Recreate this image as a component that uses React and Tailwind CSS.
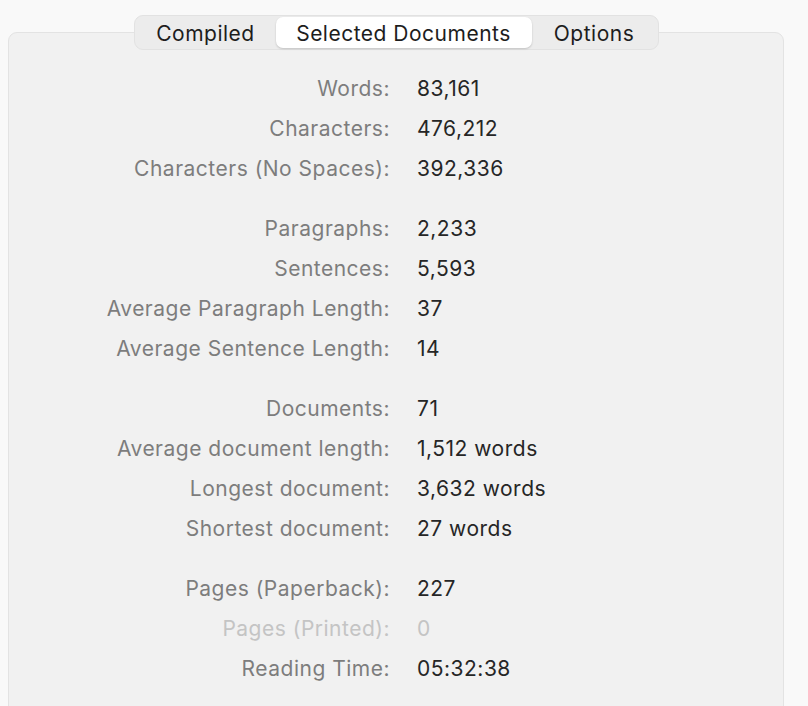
const GROUPS = [
  [
    { label: 'Words:', value: '83,161' },
    { label: 'Characters:', value: '476,212' },
    { label: 'Characters (No Spaces):', value: '392,336' }
  ],
  [
    { label: 'Paragraphs:', value: '2,233' },
    { label: 'Sentences:', value: '5,593' },
    { label: 'Average Paragraph Length:', value: '37' },
    { label: 'Average Sentence Length:', value: '14' }
  ],
  [
    { label: 'Documents:', value: '71' },
    { label: 'Average document length:', value: '1,512 words' },
    { label: 'Longest document:', value: '3,632 words' },
    { label: 'Shortest document:', value: '27 words' }
  ],
  [
    { label: 'Pages (Paperback):', value: '227' },
    { label: 'Pages (Printed):', value: '0', disabled: true },
    { label: 'Reading Time:', value: '05:32:38' }
  ]
]

const TABS = [
  { label: 'Compiled', width: 'w-[140px]' },
  { label: 'Selected Documents', width: 'w-[256px]', active: true },
  { label: 'Options', width: 'w-[125px]' }
]

export default function App() {
  return (
    <div className="h-screen overflow-hidden bg-[#f9f9f9] pt-[15px] font-['Inter','Liberation_Sans',sans-serif] text-[21px] tracking-[0.5px]">
      <div className="ml-[8px] w-[776px]">
        {/* Tabs */}
        <div className="relative z-10 flex justify-center">
          <div className="flex h-[35px] items-center rounded-[9px] border border-[#e2e2e2] bg-[#ececec] px-[1px]">
            {TABS.map(tab => (
              <div
                key={tab.label}
                className={
                  tab.active
                    ? `${tab.width} flex h-[31px] items-center justify-center rounded-[7px] bg-white pt-[3px] text-[#1d1d1d] shadow-[0_1px_2px_rgba(0,0,0,0.18)]`
                    : `${tab.width} flex h-[31px] items-center justify-center pt-[3px] text-[#1d1d1d]`
                }
              >
                {tab.label}
              </div>
            ))}
          </div>
        </div>

        {/* Panel */}
        <div className="-mt-[18px] h-[720px] rounded-[9px] border border-[#e3e3e3] bg-[#f1f1f1] pt-[36px]">
          {GROUPS.map((group, i) => (
            <div key={i} className={i > 0 ? 'mt-[20px]' : ''}>
              {group.map(row => (
                <div key={row.label} className="flex h-[40px] items-center">
                  <div
                    className={`w-[381px] text-right ${row.disabled ? 'text-[#c4c4c4]' : 'text-[#7d7d7d]'}`}
                  >
                    {row.label}
                  </div>
                  <div className={`ml-[27px] ${row.disabled ? 'text-[#c4c4c4]' : 'text-[#262626]'}`}>
                    {row.value}
                  </div>
                </div>
              ))}
            </div>
          ))}
        </div>
      </div>
    </div>
  )
}
